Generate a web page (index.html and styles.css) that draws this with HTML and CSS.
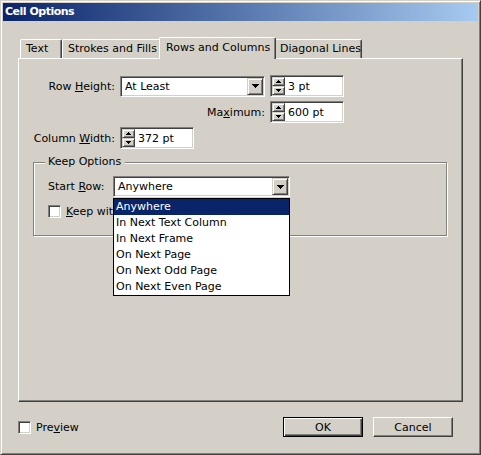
FILE: index.html
```html
<!DOCTYPE html>
<html>
<head>
<meta charset="utf-8">
<link rel="stylesheet" href="styles.css">
</head>
<body>
<div class="window">
  <div class="titlebar">Cell Options</div>
  <div class="body">
    <div class="tabs">
      <div class="tab tab-text">Text</div>
      <div class="tab tab-strokes">Strokes and Fills</div>
      <div class="tab tab-rows active">Rows and Columns</div>
      <div class="tab tab-diag">Diagonal Lines</div>
    </div>
    <div class="panel">
      <div class="rows">
        <div class="row">
          <span class="lbl">Row <u>H</u>eight:</span>
          <div class="combo combo-height">
            <span class="combo-text">At Least</span>
            <span class="dd-btn"><svg width="7" height="4" viewBox="0 0 7 4"><rect x="0" y="0" width="7" height="1"/><rect x="1" y="1" width="5" height="1"/><rect x="2" y="2" width="3" height="1"/><rect x="3" y="3" width="1" height="1"/></svg></span>
          </div>
          <div class="spin">
            <span class="spin-btns">
              <span class="sb"><svg width="5" height="3" viewBox="0 0 5 3"><rect x="2" y="0" width="1" height="1"/><rect x="1" y="1" width="3" height="1"/><rect x="0" y="2" width="5" height="1"/></svg></span>
              <span class="sb"><svg width="5" height="3" viewBox="0 0 5 3"><rect x="0" y="0" width="5" height="1"/><rect x="1" y="1" width="3" height="1"/><rect x="2" y="2" width="1" height="1"/></svg></span>
            </span>
            <span class="spin-text">3 pt</span>
          </div>
        </div>
        <div class="row">
          <span class="lbl lbl-wide">Ma<u>x</u>imum:</span>
          <div class="spin">
            <span class="spin-btns">
              <span class="sb"><svg width="5" height="3" viewBox="0 0 5 3"><rect x="2" y="0" width="1" height="1"/><rect x="1" y="1" width="3" height="1"/><rect x="0" y="2" width="5" height="1"/></svg></span>
              <span class="sb"><svg width="5" height="3" viewBox="0 0 5 3"><rect x="0" y="0" width="5" height="1"/><rect x="1" y="1" width="3" height="1"/><rect x="2" y="2" width="1" height="1"/></svg></span>
            </span>
            <span class="spin-text">600 pt</span>
          </div>
        </div>
        <div class="row">
          <span class="lbl">Column <u>W</u>idth:</span>
          <div class="spin">
            <span class="spin-btns">
              <span class="sb"><svg width="5" height="3" viewBox="0 0 5 3"><rect x="2" y="0" width="1" height="1"/><rect x="1" y="1" width="3" height="1"/><rect x="0" y="2" width="5" height="1"/></svg></span>
              <span class="sb"><svg width="5" height="3" viewBox="0 0 5 3"><rect x="0" y="0" width="5" height="1"/><rect x="1" y="1" width="3" height="1"/><rect x="2" y="2" width="1" height="1"/></svg></span>
            </span>
            <span class="spin-text">372 pt</span>
          </div>
        </div>
      </div>
      <div class="group">
        <div class="legend">Keep Options</div>
        <div class="start-row">
          <span class="lbl-start">Start <u>R</u>ow:</span>
          <div class="combo combo-start">
            <span class="combo-text">Anywhere</span>
            <span class="dd-btn"><svg width="7" height="4" viewBox="0 0 7 4"><rect x="0" y="0" width="7" height="1"/><rect x="1" y="1" width="5" height="1"/><rect x="2" y="2" width="3" height="1"/><rect x="3" y="3" width="1" height="1"/></svg></span>
            <ul class="list">
              <li class="item selected">Anywhere</li>
              <li class="item">In Next Text Column</li>
              <li class="item">In Next Frame</li>
              <li class="item">On Next Page</li>
              <li class="item">On Next Odd Page</li>
              <li class="item">On Next Even Page</li>
            </ul>
          </div>
        </div>
        <div class="keep-row">
          <span class="chk"></span>
          <span class="chk-label"><u>K</u>eep with Next Row</span>
        </div>
      </div>
    </div>
    <div class="footer">
      <span class="chk"></span>
      <span class="chk-label">Pre<u>v</u>iew</span>
      <div class="buttons">
        <div class="btn btn-default">OK</div>
        <div class="btn">Cancel</div>
      </div>
    </div>
  </div>
</div>
</body>
</html>
```
FILE: styles.css
```css
* { box-sizing: border-box; }

body {
  margin: 0;
  background: #d4d0c8;
  font-family: "DejaVu Sans", sans-serif;
  font-size: 11px;
  line-height: 13px;
  color: #000;
}

u { text-decoration: underline; text-underline-offset: 1px; }

.window {
  width: 481px;
  height: 455px;
  border: 1px solid;
  border-color: #d4d0c8 #404040 #404040 #d4d0c8;
  padding: 2px;
  box-shadow: inset 1px 1px #fff, inset -1px -1px #808080;
  background: #d4d0c8;
  display: flex;
  flex-direction: column;
}

.titlebar {
  height: 18px;
  flex: none;
  background: linear-gradient(to right, #0a246a, #a6caf0);
  color: #fff;
  font-weight: bold;
  font-size: 11px;
  letter-spacing: -0.5px;
  line-height: 18px;
  padding-left: 2px;
}

.body {
  padding: 16px 0 0 15px;
}

.tabs {
  display: flex;
  align-items: flex-end;
  height: 21px;
  padding-left: 2px;
}

.tab {
  height: 19px;
  border-top: 1px solid #fff;
  border-left: 1px solid #fff;
  border-right: 1px solid #404040;
  border-radius: 2px 2px 0 0;
  box-shadow: inset -1px 0 #808080;
  padding: 2px 0 0 5px;
  white-space: nowrap;
  background: #d4d0c8;
}

.tab-text { width: 42px; }
.tab-strokes { width: 99px; }
.tab-rows { width: 117px; }
.tab-diag { width: 88px; }

.tab.active {
  height: 22px;
  margin: 0 -2px -1px -2px;
  padding: 3px 0 0 6px;
  position: relative;
  z-index: 1;
}

.panel {
  width: 445px;
  height: 344px;
  border: 1px solid;
  border-color: #fff #404040 #404040 #fff;
  box-shadow: inset -1px -1px #808080;
  padding-top: 16px;
}

.rows {
  display: flex;
  flex-direction: column;
  gap: 4px;
}

.row {
  display: flex;
  align-items: center;
  height: 22px;
}

.lbl {
  width: 96px;
  margin-right: 5px;
  text-align: right;
  white-space: nowrap;
}

.lbl-wide { width: 246px; }

.combo, .spin {
  border: 1px solid;
  border-color: #808080 #fff #fff #808080;
  box-shadow: inset 1px 1px #404040, inset -1px -1px #d4d0c8;
  background: #fff;
  padding: 1px;
  display: flex;
  align-items: center;
}

.combo { height: 21px; position: relative; }
.combo-height { width: 145px; margin-right: 5px; }
.combo-start { width: 177px; }

.combo-text {
  flex: 1;
  padding-left: 3px;
  white-space: nowrap;
}

.dd-btn {
  width: 16px;
  height: 17px;
  flex: none;
  border: 1px solid;
  border-color: #d4d0c8 #404040 #404040 #d4d0c8;
  box-shadow: inset 1px 1px #fff, inset -1px -1px #808080;
  background: #d4d0c8;
  display: flex;
  align-items: center;
  justify-content: center;
}

.dd-btn svg, .sb svg { display: block; fill: #000; }

.spin { width: 74px; height: 22px; }

.spin-btns {
  width: 13px;
  height: 18px;
  display: flex;
  flex-direction: column;
  flex: none;
}

.sb {
  height: 9px;
  border: 1px solid;
  border-color: #d4d0c8 #404040 #404040 #d4d0c8;
  box-shadow: inset 1px 1px #fff, inset -1px -1px #808080;
  background: #d4d0c8;
  display: flex;
  align-items: center;
  justify-content: center;
}

.spin-text {
  padding-left: 3px;
  white-space: nowrap;
}

.group {
  margin: 13px 0 0 14px;
  width: 414px;
  height: 74px;
  border: 1px solid #808080;
  box-shadow: inset 1px 1px #fff, 1px 1px #fff;
  padding-left: 14px;
}

.legend {
  width: max-content;
  height: 13px;
  margin: -8px 0 0 -3px;
  padding: 0 4px 0 3px;
  background: #d4d0c8;
}

.start-row {
  display: flex;
  align-items: center;
  height: 21px;
  margin-top: 8px;
}

.lbl-start { width: 65px; white-space: nowrap; }

.keep-row {
  display: flex;
  align-items: center;
  height: 13px;
  margin-top: 8px;
}

.chk {
  width: 13px;
  height: 13px;
  flex: none;
  border: 1px solid;
  border-color: #808080 #fff #fff #808080;
  box-shadow: inset 1px 1px #404040, inset -1px -1px #d4d0c8;
  background: #fff;
}

.chk-label {
  margin-left: 5px;
  white-space: nowrap;
}

.list {
  position: absolute;
  left: -1px;
  top: 21px;
  width: 177px;
  margin: 0;
  padding: 0;
  list-style: none;
  background: #fff;
  border: 1px solid #000;
  z-index: 5;
}

.item {
  height: 16px;
  line-height: 16px;
  padding-left: 2px;
  white-space: nowrap;
}

.item.selected {
  background: #0a246a;
  color: #fff;
}

.footer {
  display: flex;
  align-items: center;
  padding: 15px 0 0 0;
  height: 35px;
}

.buttons {
  margin-left: auto;
  margin-right: 25px;
  display: flex;
  gap: 10px;
}

.btn {
  width: 80px;
  height: 20px;
  border: 1px solid;
  border-color: #fff #404040 #404040 #fff;
  box-shadow: inset -1px -1px #808080;
  display: flex;
  align-items: center;
  justify-content: center;
}

.btn-default {
  border-color: #000;
  box-shadow: inset 1px 1px #fff, inset -1px -1px #404040, inset -2px -2px #808080;
}
```
